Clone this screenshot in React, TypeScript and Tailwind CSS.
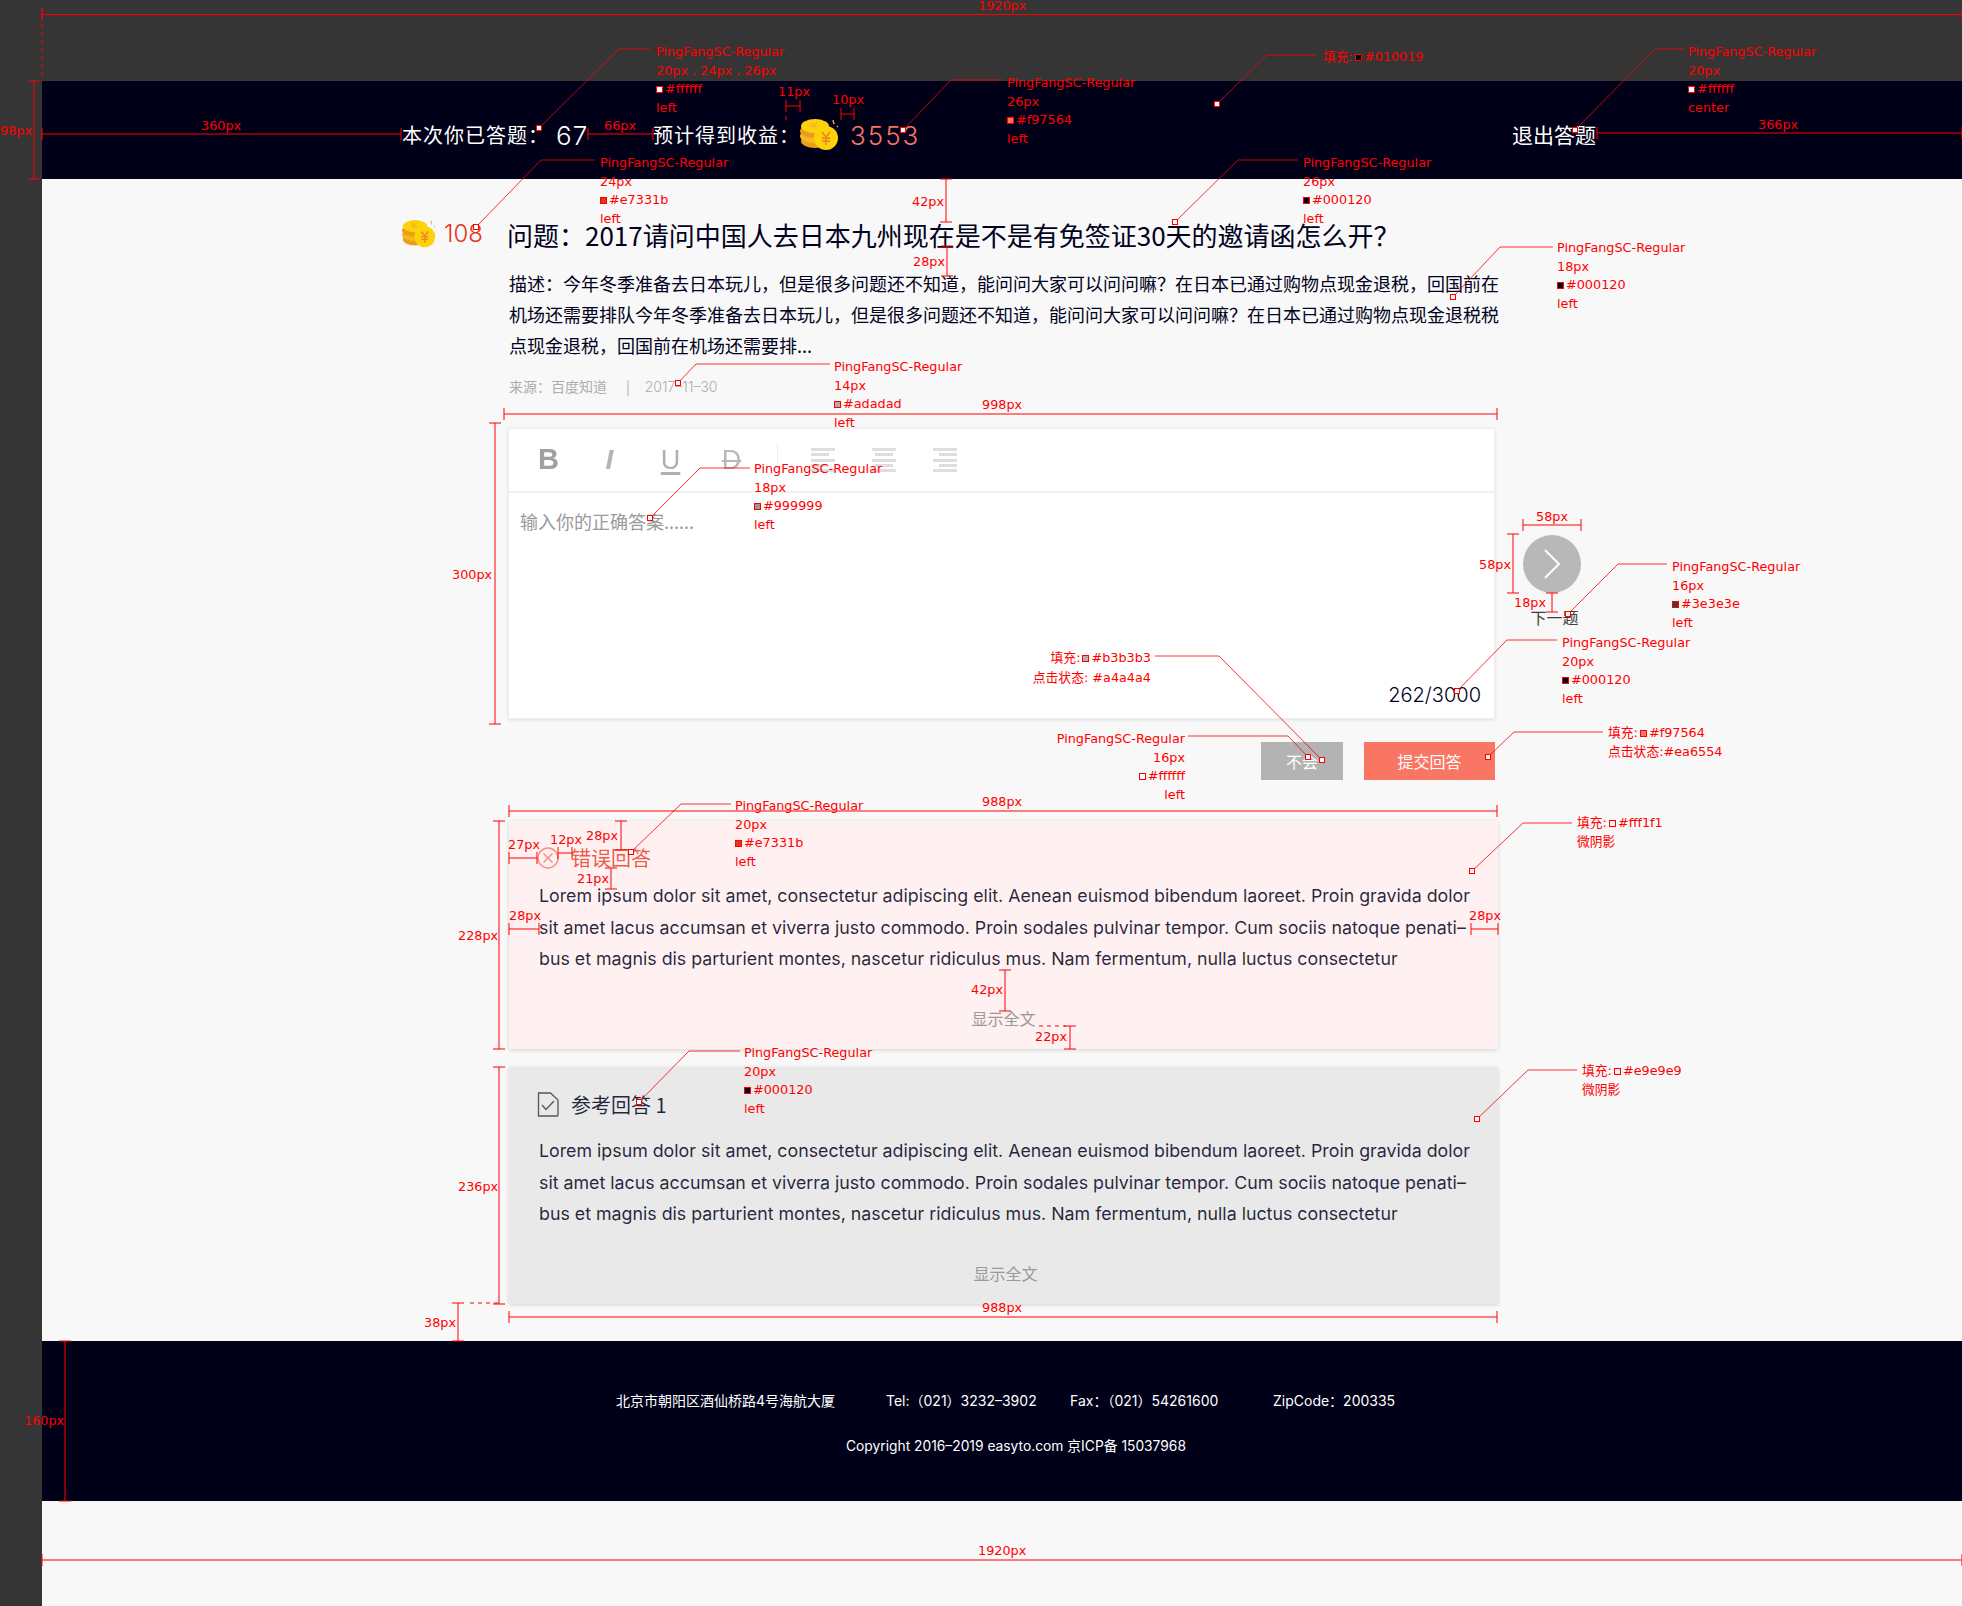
import React from 'react';

// full-width punctuation, kept as escapes so the editor can't flatten it
const COLON = '\uFF1A';
const COMMA = '\uFF0C';
const QM = '\uFF1F';
const LP = '\uFF08';
const RP = '\uFF09';

type Note = { x: number; y: number; text: string; pre?: string; swatch?: string; right?: boolean };
type Leader = number[];

// one annotation block: rows of red text, 18.7px apart
const block = (x: number, y: number, rows: string[], swatch?: string, right?: boolean): Note[] =>
  rows.map((text, i) => ({
    x,
    y: y + i * 18.7,
    text,
    right,
    swatch: swatch && text.startsWith('#') ? swatch : undefined,
  }));

const font = (x: number, y: number, size: string, hex: string, align: string, right?: boolean) =>
  block(x, y, ['PingFangSC-Regular', size, hex, align], hex, right);

const notes: Note[] = [
  { x: 978, y: 6, text: '1920px' },
  ...font(656, 52, '20px , 24px , 26px', '#ffffff', 'left'),
  { x: 778, y: 92, text: '11px' },
  { x: 832, y: 100, text: '10px' },
  { x: 201, y: 126, text: '360px' },
  { x: 604, y: 126, text: '66px' },
  { x: 0, y: 131, text: '98px' },
  ...font(600, 163, '24px', '#e7331b', 'left'),
  { x: 912, y: 202, text: '42px' },
  { x: 913, y: 262, text: '28px' },
  ...font(1007, 83, '26px', '#f97564', 'left'),
  { x: 1323, y: 57, pre: '填充:', text: '#010019', swatch: '#010019' },
  ...font(1688, 52, '20px', '#ffffff', 'center'),
  { x: 1758, y: 125, text: '366px' },
  ...font(1303, 163, '26px', '#000120', 'left'),
  ...font(1557, 248, '18px', '#000120', 'left'),
  ...font(834, 367, '14px', '#adadad', 'left'),
  { x: 982, y: 405, text: '998px' },
  { x: 452, y: 575, text: '300px' },
  ...font(754, 469, '18px', '#999999', 'left'),
  { x: 1536, y: 517, text: '58px' },
  { x: 1479, y: 565, text: '58px' },
  { x: 1514, y: 603, text: '18px' },
  ...font(1672, 567, '16px', '#3e3e3e', 'left'),
  ...font(1562, 643, '20px', '#000120', 'left'),
  { x: 1151, y: 658, pre: '填充:', text: '#b3b3b3', swatch: '#b3b3b3', right: true },
  { x: 1151, y: 678, text: '点击状态: #a4a4a4', right: true },
  ...font(1185, 739, '16px', '#ffffff', 'left', true),
  { x: 1608, y: 733, pre: '填充:', text: '#f97564', swatch: '#f97564' },
  { x: 1608, y: 752, text: '点击状态:#ea6554' },
  { x: 982, y: 802, text: '988px' },
  ...font(735, 806, '20px', '#e7331b', 'left'),
  { x: 458, y: 936, text: '228px' },
  { x: 508, y: 845, text: '27px' },
  { x: 550, y: 840, text: '12px' },
  { x: 586, y: 836, text: '28px' },
  { x: 577, y: 879, text: '21px' },
  { x: 509, y: 916, text: '28px' },
  { x: 1469, y: 916, text: '28px' },
  { x: 971, y: 990, text: '42px' },
  { x: 1035, y: 1037, text: '22px' },
  { x: 1577, y: 823, pre: '填充:', text: '#fff1f1', swatch: '#fff1f1' },
  { x: 1577, y: 842, text: '微阴影' },
  ...font(744, 1053, '20px', '#000120', 'left'),
  { x: 458, y: 1187, text: '236px' },
  { x: 424, y: 1323, text: '38px' },
  { x: 982, y: 1308, text: '988px' },
  { x: 1582, y: 1071, pre: '填充:', text: '#e9e9e9', swatch: '#e9e9e9' },
  { x: 1582, y: 1090, text: '微阴影' },
  { x: 24, y: 1421, text: '160px' },
  { x: 978, y: 1551, text: '1920px' },
];

// x1 y1 x2 y2 x3 y3 : small square, elbow, end of the shelf
const leaders: Leader[] = [
  [539, 128, 619, 49, 650, 49],
  [476, 227, 541, 160, 595, 160],
  [903, 130, 951, 80, 1003, 80],
  [1217, 104, 1267, 55, 1317, 55],
  [1575, 130, 1655, 49, 1684, 49],
  [1175, 222, 1238, 160, 1298, 160],
  [1453, 297, 1500, 247, 1553, 247],
  [678, 383, 696, 364, 830, 364],
  [650, 518, 700, 468, 750, 468],
  [1568, 614, 1618, 564, 1667, 564],
  [1457, 691, 1507, 640, 1557, 640],
  [1322, 760, 1219, 656, 1155, 656],
  [1308, 757, 1288, 736, 1188, 736],
  [1488, 757, 1514, 732, 1603, 732],
  [631, 852, 681, 804, 731, 804],
  [1472, 871, 1523, 823, 1572, 823],
  [639, 1102, 689, 1051, 740, 1051],
  [1477, 1119, 1528, 1070, 1577, 1070],
];

// x1 y1 x2 y2, ticks drawn across both ends
const spans: number[][] = [
  [42, 14.5, 1962, 14.5],
  [42, 134, 401, 134],
  [588, 134, 653, 134],
  [1597, 133, 1962, 133],
  [786, 106, 800, 106],
  [841, 114, 854, 114],
  [34, 81, 34, 179],
  [946, 179, 946, 222],
  [947, 246, 947, 276],
  [504, 414, 1497, 414],
  [495, 423, 495, 724],
  [1523, 525, 1581, 525],
  [1513, 534, 1513, 593],
  [1552, 593, 1552, 612],
  [509, 811, 1497, 811],
  [499, 821, 499, 1049],
  [509, 858, 537, 858],
  [558, 853, 572, 853],
  [621, 821, 621, 850],
  [611, 868, 611, 889],
  [509, 929, 539, 929],
  [1471, 929, 1498, 929],
  [1005, 970, 1005, 1011],
  [1070, 1026, 1070, 1049],
  [499, 1067, 499, 1304],
  [458, 1303, 458, 1341],
  [509, 1317, 1497, 1317],
  [65, 1341, 65, 1501],
  [42, 1560, 1962, 1560],
];

const dashes: number[][] = [
  [42, 8, 42, 81],
  [786, 116, 786, 124],
  [470, 1303, 500, 1303],
  [1039, 1026, 1066, 1026],
];

const Annotations = () => (
  <>
    <svg className="absolute inset-0 pointer-events-none" width={1962} height={1606} fill="none">
      {spans.map(([a, b, c, d], i) => {
        const flat = b === d;
        return (
          <g key={i} stroke="#ff0000">
            <line x1={a} y1={b} x2={c} y2={d} />
            <line x1={flat ? a : a - 6} y1={flat ? b - 6 : b} x2={flat ? a : a + 6} y2={flat ? b + 6 : b} />
            <line x1={flat ? c : c - 6} y1={flat ? d - 6 : d} x2={flat ? c : c + 6} y2={flat ? d + 6 : d} />
          </g>
        );
      })}
      {dashes.map(([a, b, c, d], i) => (
        <line key={i} x1={a} y1={b} x2={c} y2={d} stroke="#ff0000" strokeDasharray="4 4" />
      ))}
      {leaders.map((p, i) => (
        <g key={i} stroke="#ff0000">
          <polyline points={`${p[0]},${p[1]} ${p[2]},${p[3]} ${p[4]},${p[5]}`} strokeWidth={0.8} />
          <rect x={p[0] - 2.5} y={p[1] - 2.5} width={5} height={5} fill="#ffffff" />
        </g>
      ))}
    </svg>
    {notes.map((n, i) => (
      <div
        key={i}
        className="absolute flex items-center gap-[2px] whitespace-nowrap text-[12.8px] leading-[16px] text-[#ff0000] font-['DejaVu_Sans','Noto_Sans_CJK_SC',sans-serif]"
        style={{
          top: n.y - 8,
          ...(n.right ? { right: 1962 - n.x } : { left: n.x }),
        }}
      >
        {n.pre}
        {n.swatch && (
          <span
            className="inline-block w-[7px] h-[7px] border border-[#ff0000]"
            style={{ backgroundColor: n.swatch }}
          />
        )}
        {n.text}
      </div>
    ))}
  </>
);

const Coin = ({ size }: { size: number }) => (
  <svg width={size} height={size * 0.78} viewBox="0 0 40 31" className="shrink-0">
    <ellipse cx="15" cy="22" rx="14" ry="7" fill="#e8a01c" />
    <ellipse cx="14" cy="17" rx="14" ry="7" fill="#f7b71d" />
    <ellipse cx="14" cy="12" rx="14" ry="7" fill="#e8a01c" />
    <ellipse cx="15" cy="7" rx="14" ry="7" fill="#fdd20a" />
    <path d="M11 3l3 3 3-3M14 6v4M10 7h8" stroke="#f5b21e" strokeWidth="1.2" fill="none" />
    <circle cx="26" cy="19" r="12" fill="#fdd20a" />
    <path d="M22 13l4 5 4-5M26 18v8M22 19h8M22 22h8" stroke="#f0851e" strokeWidth="1.6" fill="none" />
    <path d="M33 1l1 4M37 7l1 1" stroke="#f0b64a" strokeWidth="1.4" />
  </svg>
);

const ALIGN_WIDTHS = ['w-full', 'w-[75%]', 'w-full', 'w-[75%]', 'w-full'];

const AlignIcon = ({ side }: { side: 'left' | 'center' | 'right' }) => {
  const cls = side === 'left' ? 'items-start' : side === 'center' ? 'items-center' : 'items-end';
  return (
    <div className={`w-[24px] h-[24px] flex flex-col justify-between blur-[0.6px] ${cls}`}>
      {ALIGN_WIDTHS.map((w, i) => (
        <span key={i} className={`h-[3px] bg-[#dedede] ${w}`} />
      ))}
    </div>
  );
};

const ToolCell = ({ children }: { children: React.ReactNode }) => (
  <div className="w-[61px] flex justify-center items-center">{children}</div>
);

const Toolbar = () => (
  <div className="h-[64px] flex items-center pl-[9px] border-b-2 border-[#f0f0f0] font-['Liberation_Sans',sans-serif]">
    <ToolCell>
      <span className="text-[29px] font-bold text-[#a0a0a0] blur-[0.7px]">B</span>
    </ToolCell>
    <ToolCell>
      <span className="text-[28px] italic font-bold text-[#b4b4b4] blur-[0.6px]">I</span>
    </ToolCell>
    <ToolCell>
      <span className="text-[27px] text-[#b0b0b0] underline decoration-[3px] underline-offset-[3px] blur-[0.6px]">U</span>
    </ToolCell>
    <ToolCell>
      <span className="text-[27px] text-[#b8b8b8] line-through blur-[0.6px]">D</span>
    </ToolCell>
    <div className="ml-[15px] mr-[14px] w-px h-[34px] bg-[#eeeeee]" />
    <ToolCell>
      <AlignIcon side="left" />
    </ToolCell>
    <ToolCell>
      <AlignIcon side="center" />
    </ToolCell>
    <ToolCell>
      <AlignIcon side="right" />
    </ToolCell>
  </div>
);

const LOREM = [
  'Lorem ipsum dolor sit amet, consectetur adipiscing elit. Aenean euismod bibendum laoreet. Proin gravida dolor',
  'sit amet lacus accumsan et viverra justo commodo. Proin sodales pulvinar tempor. Cum sociis natoque penati–',
  'bus et magnis dis parturient montes, nascetur ridiculus mus. Nam fermentum, nulla luctus consectetur',
];

const DESC = [
  `描述${COLON}今年冬季准备去日本玩儿${COMMA}但是很多问题还不知道${COMMA}能问问大家可以问问嘛${QM}在日本已通过购物点现金退税${COMMA}回国前在`,
  `机场还需要排队今年冬季准备去日本玩儿${COMMA}但是很多问题还不知道${COMMA}能问问大家可以问问嘛${QM}在日本已通过购物点现金退税税`,
  `点现金退税${COMMA}回国前在机场还需要排...`,
];

const Lorem = () => (
  <div className="text-[17.8px] leading-[31.5px] text-[#000120]/85 whitespace-nowrap font-['Inter',sans-serif]">
    {LOREM.map((line) => (
      <div key={line}>{line}</div>
    ))}
  </div>
);

export default function App() {
  return (
    <div className="relative flex w-[1962px] h-[1606px] overflow-hidden bg-[#f8f8f8] font-['Noto_Sans_CJK_SC',sans-serif]">
      <div className="w-[42px] shrink-0 bg-[#353535]" />
      <div className="flex-1 flex flex-col min-w-0">
        <div className="h-[81px] bg-[#353535]" />

        <header className="h-[98px] bg-[#010019] flex items-center justify-between pl-[360px] pr-[366px] pt-[10px] text-white">
          <div className="flex items-center">
            <span className="text-[20px] tracking-[1px] w-[154px]">{`本次你已答题${COLON}`}</span>
            <span className="text-[26px] w-[97px] tracking-[1px] font-['Inter',sans-serif] font-light">67</span>
            <span className="text-[20px] tracking-[1px] w-[147px]">{`预计得到收益${COLON}`}</span>
            <Coin size={40} />
            <span className="ml-[10px] text-[26px] tracking-[2px] text-[#f97564] font-['Inter',sans-serif] font-light">3553</span>
          </div>
          <span className="text-[21px]">退出答题</span>
        </header>

        <div className="pl-[360px]">
          <div className="mt-[40px] h-[30px] flex items-center">
            <div className="w-[105px] flex items-center">
              <Coin size={35} />
              <span className="ml-[7px] text-[24px] text-[#e7331b] font-['Inter',sans-serif] font-light">108</span>
            </div>
            <h1 className="text-[26px] text-[#000120] font-normal whitespace-nowrap">
              {`问题${COLON}2017请问中国人去日本九州现在是不是有免签证30天的邀请函怎么开${QM}`}
            </h1>
          </div>

          <div className="mt-[19px] ml-[107px] text-[18px] leading-[31px] text-[#000120] whitespace-nowrap">
            {DESC.map((line) => (
              <div key={line}>{line}</div>
            ))}
          </div>

          <div className="mt-[15px] ml-[107px] h-[20px] flex items-center text-[14px] text-[#adadad]">
            <span>{`来源${COLON}百度知道`}</span>
            <span className="ml-[19px]">|</span>
            <span className="ml-[15px] font-['Inter',sans-serif] font-light">2017–11–30</span>
          </div>

          <div className="mt-[32px] ml-[106px] flex items-start">
            <div className="w-[987px] h-[291px] bg-white border border-[#eeeeee] shadow-[0_1px_3px_rgba(0,0,0,0.1)] flex flex-col">
              <Toolbar />
              <div className="flex-1 flex flex-col justify-between pl-[11px] pr-[13px] pt-[13px] pb-[10px]">
                <div className="text-[18px] leading-[30px] text-[#999999]">输入你的正确答案......</div>
                <div className="self-end text-[20px] leading-[26px] text-[#000120] font-['Inter',sans-serif] font-light">262/3000</div>
              </div>
            </div>
            <div className="ml-[28px] pt-[107px] w-[58px] flex flex-col items-center">
              <div className="w-[58px] h-[58px] rounded-full bg-[#b8b8b8] flex items-center justify-center">
                <svg width="18" height="30" viewBox="0 0 18 30" fill="none">
                  <path d="M2 1l14 14L2 29" stroke="#ffffff" strokeWidth="2" />
                </svg>
              </div>
              <span className="mt-[13px] ml-[5px] text-[16px] leading-[22px] text-[#3e3e3e] whitespace-nowrap">下一题</span>
            </div>
          </div>

          <div className="mt-[23px] ml-[106px] w-[987px] flex justify-end gap-[21px]">
            <button className="w-[82px] h-[38px] bg-[#b3b3b3] text-white text-[16px]">不会</button>
            <button className="w-[131px] h-[38px] bg-[#f97564] text-white text-[16px]">提交回答</button>
          </div>

          <section className="mt-[41px] ml-[107px] w-[989px] h-[228px] bg-[#fff1f1] shadow-[0_1px_4px_rgba(0,0,0,0.15)] pl-[30px] pt-[26px]">
            <div className="h-[22px] -ml-[2px] flex items-center">
              <svg width="22" height="22" viewBox="0 0 22 22" fill="none" stroke="#f98b80" strokeWidth="1.4">
                <circle cx="11" cy="11" r="10" />
                <path d="M6.5 6.5l9 9M15.5 6.5l-9 9" />
              </svg>
              <span className="ml-[12px] text-[20px] text-[#e7331b]/80">错误回答</span>
            </div>
            <div className="mt-[11px]">
              <Lorem />
            </div>
            <div className="mt-[32px] -ml-[30px] text-center text-[16px] leading-[22px] text-[#999999]">显示全文</div>
          </section>

          <section className="mt-[18px] ml-[107px] w-[989px] h-[237px] bg-[#e9e9e9] shadow-[0_1px_4px_rgba(0,0,0,0.15)] pl-[30px] pt-[25px]">
            <div className="h-[25px] -ml-[2px] flex items-center">
              <svg width="22" height="25" viewBox="0 0 22 25" fill="none" stroke="#55555f" strokeWidth="1.3">
                <path d="M1.5 1h12L21 8v15.2a.8.8 0 0 1-.8.8H1.5z" />
                <path d="M5 13l4 4.5L17 9" />
              </svg>
              <span className="ml-[12px] text-[20px] text-[#000120]/85">参考回答 1</span>
            </div>
            <div className="mt-[18px]">
              <Lorem />
            </div>
            <div className="mt-[32px] -ml-[26px] text-center text-[16px] leading-[22px] text-[#999999]">显示全文</div>
          </section>
        </div>

        <footer className="mt-[37px] h-[160px] bg-[#010019] text-white text-[14px] leading-[20px] font-['Inter','Noto_Sans_CJK_SC',sans-serif]">
          <div className="pt-[50px] pl-[574px] flex whitespace-nowrap">
            <span className="w-[270px]">北京市朝阳区酒仙桥路4号海航大厦</span>
            <span className="w-[184px]">{`Tel:${LP}021${RP}3232–3902`}</span>
            <span className="w-[203px]">{`Fax${COLON}${LP}021${RP}54261600`}</span>
            <span>{`ZipCode${COLON}200335`}</span>
          </div>
          <div className="mt-[25px] pl-[804px] text-[13.8px] whitespace-nowrap">Copyright 2016–2019 easyto.com 京ICP备 15037968</div>
        </footer>
      </div>
      <Annotations />
    </div>
  );
}
